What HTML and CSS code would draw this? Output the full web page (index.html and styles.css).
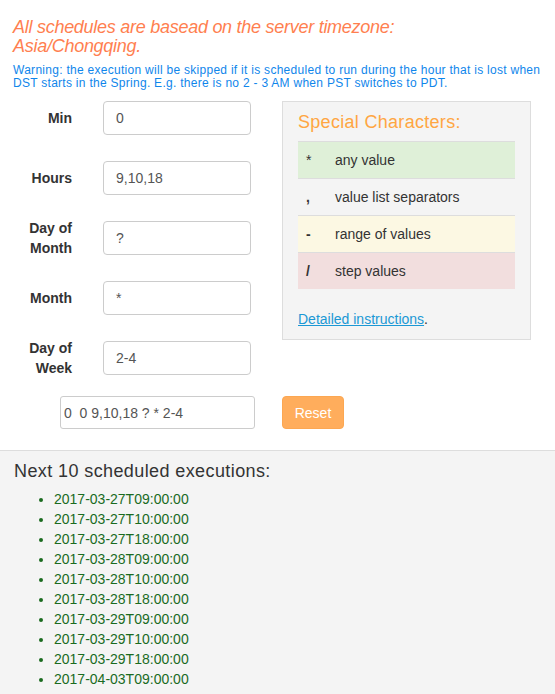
FILE: index.html
```html
<!DOCTYPE html>
<html>
<head>
<meta charset="utf-8">
<link rel="stylesheet" href="styles.css">
</head>
<body>
<div class="top">
  <h4 class="tz">All schedules are basead on the server timezone:<br>Asia/Chongqing.</h4>
  <p class="warn">Warning: the execution will be skipped if it is scheduled to run during the hour that is lost when<br>DST starts in the Spring. E.g. there is no 2 - 3 AM when PST switches to PDT.</p>
  <div class="main">
    <div class="form">
      <div class="row"><label class="lbl">Min</label><input class="field" type="text" value="0"></div>
      <div class="row"><label class="lbl">Hours</label><input class="field" type="text" value="9,10,18"></div>
      <div class="row"><label class="lbl">Day of Month</label><input class="field" type="text" value="?"></div>
      <div class="row"><label class="lbl">Month</label><input class="field" type="text" value="*"></div>
      <div class="row row-last"><label class="lbl">Day of Week</label><input class="field" type="text" value="2-4"></div>
      <div class="cron-row">
        <input class="cron" type="text" value="0  0 9,10,18 ? * 2-4">
        <button class="reset" type="button">Reset</button>
      </div>
    </div>
    <div class="panel">
      <h4 class="panel-title">Special Characters:</h4>
      <table class="chars">
        <tr class="ok"><td class="sym">*</td><td class="desc">any value</td></tr>
        <tr><td class="sym strong">,</td><td class="desc">value list separators</td></tr>
        <tr class="warnrow"><td class="sym strong">-</td><td class="desc">range of values</td></tr>
        <tr class="bad"><td class="sym strong">/</td><td class="desc">step values</td></tr>
      </table>
      <p class="more"><a href="#" class="link">Detailed instructions</a>.</p>
    </div>
  </div>
</div>
<div class="next">
  <h4 class="next-title">Next 10 scheduled executions:</h4>
  <ul class="list">
    <li>2017-03-27T09:00:00</li>
    <li>2017-03-27T10:00:00</li>
    <li>2017-03-27T18:00:00</li>
    <li>2017-03-28T09:00:00</li>
    <li>2017-03-28T10:00:00</li>
    <li>2017-03-28T18:00:00</li>
    <li>2017-03-29T09:00:00</li>
    <li>2017-03-29T10:00:00</li>
    <li>2017-03-29T18:00:00</li>
    <li>2017-04-03T09:00:00</li>
  </ul>
</div>
</body>
</html>
```

FILE: styles.css
```css
* { box-sizing: border-box; }
html, body { margin: 0; padding: 0; }
body {
  font-family: "Liberation Sans", Arial, sans-serif;
  font-size: 14px;
  line-height: 20px;
  color: #333;
  background: #fff;
}
.top { padding: 18px 13px 21px 13px; }
.tz {
  margin: 0;
  font-size: 18px;
  line-height: 19px;
  font-style: italic;
  font-weight: normal;
  letter-spacing: -0.27px;
  color: #ff7f50;
}
.warn {
  margin: 8px 0 0 0;
  font-size: 12px;
  line-height: 13px;
  letter-spacing: 0.28px;
  white-space: nowrap;
  color: #0f86eb;
}
.main {
  display: flex;
  align-items: flex-start;
  margin-top: 11px;
}
.form { width: 269px; flex-shrink: 0; }
.row {
  display: flex;
  align-items: center;
  height: 34px;
  margin-bottom: 26px;
}
.row-last { margin-bottom: 0; }
.lbl {
  width: 59px;
  flex-shrink: 0;
  text-align: right;
  font-weight: bold;
  line-height: 20px;
  margin-right: 31px;
}
.field {
  width: 148px;
  height: 34px;
  padding: 6px 12px;
  border: 1px solid #ccc;
  border-radius: 4px;
  font-family: inherit;
  font-size: 14px;
  color: #555;
  background: #fff;
}
.cron-row {
  display: flex;
  align-items: center;
  margin-top: 21px;
  padding-left: 47px;
}
.cron {
  flex-shrink: 0;
  width: 195px;
  height: 33px;
  padding: 4px 3px;
  border: 1px solid #ccc;
  border-radius: 3px;
  font-family: inherit;
  font-size: 14px;
  color: #555;
  background: #fff;
}
.reset {
  flex-shrink: 0;
  margin-left: 27px;
  width: 62px;
  height: 33px;
  background: #ffad5c;
  border: 1px solid #fca752;
  border-radius: 4px;
  color: #fff;
  font-family: inherit;
  font-size: 14px;
  padding: 0;
}
.panel {
  margin-left: 0;
  width: 249px;
  background: #f4f4f4;
  border: 1px solid #ddd;
  padding: 10px 15px 10px 15px;
}
.panel-title {
  margin: 0 0 9px 0;
  font-size: 18px;
  line-height: 20px;
  font-weight: normal;
  letter-spacing: 0.3px;
  color: #ffa642;
}
.chars {
  width: 100%;
  border-collapse: collapse;
}
.chars td {
  border-top: 1px solid #ddd;
  padding: 8px;
  line-height: 20px;
}
.chars .sym { width: 37px; }
.chars .strong { font-weight: bold; }
.chars .desc { padding-left: 0; }
.chars tr.ok td { background: #dff0d8; }
.chars tr.warnrow td { background: #fcf8e3; }
.chars tr.bad td { background: #f2dede; }
.more { margin: 20px 0 0 0; }
.link { color: #1b98d5; text-decoration: underline; }
.next {
  border-top: 1px solid #ddd;
  background: #f4f4f4;
  padding: 10px 14px 20px 14px;
}
.next-title {
  margin: 0 0 8px 0;
  font-size: 18px;
  line-height: 20px;
  font-weight: normal;
  letter-spacing: 0.4px;
  color: #333;
}
.list {
  margin: 0;
  padding-left: 40px;
  color: #1a6b1f;
}
.list li { line-height: 20px; }
```
